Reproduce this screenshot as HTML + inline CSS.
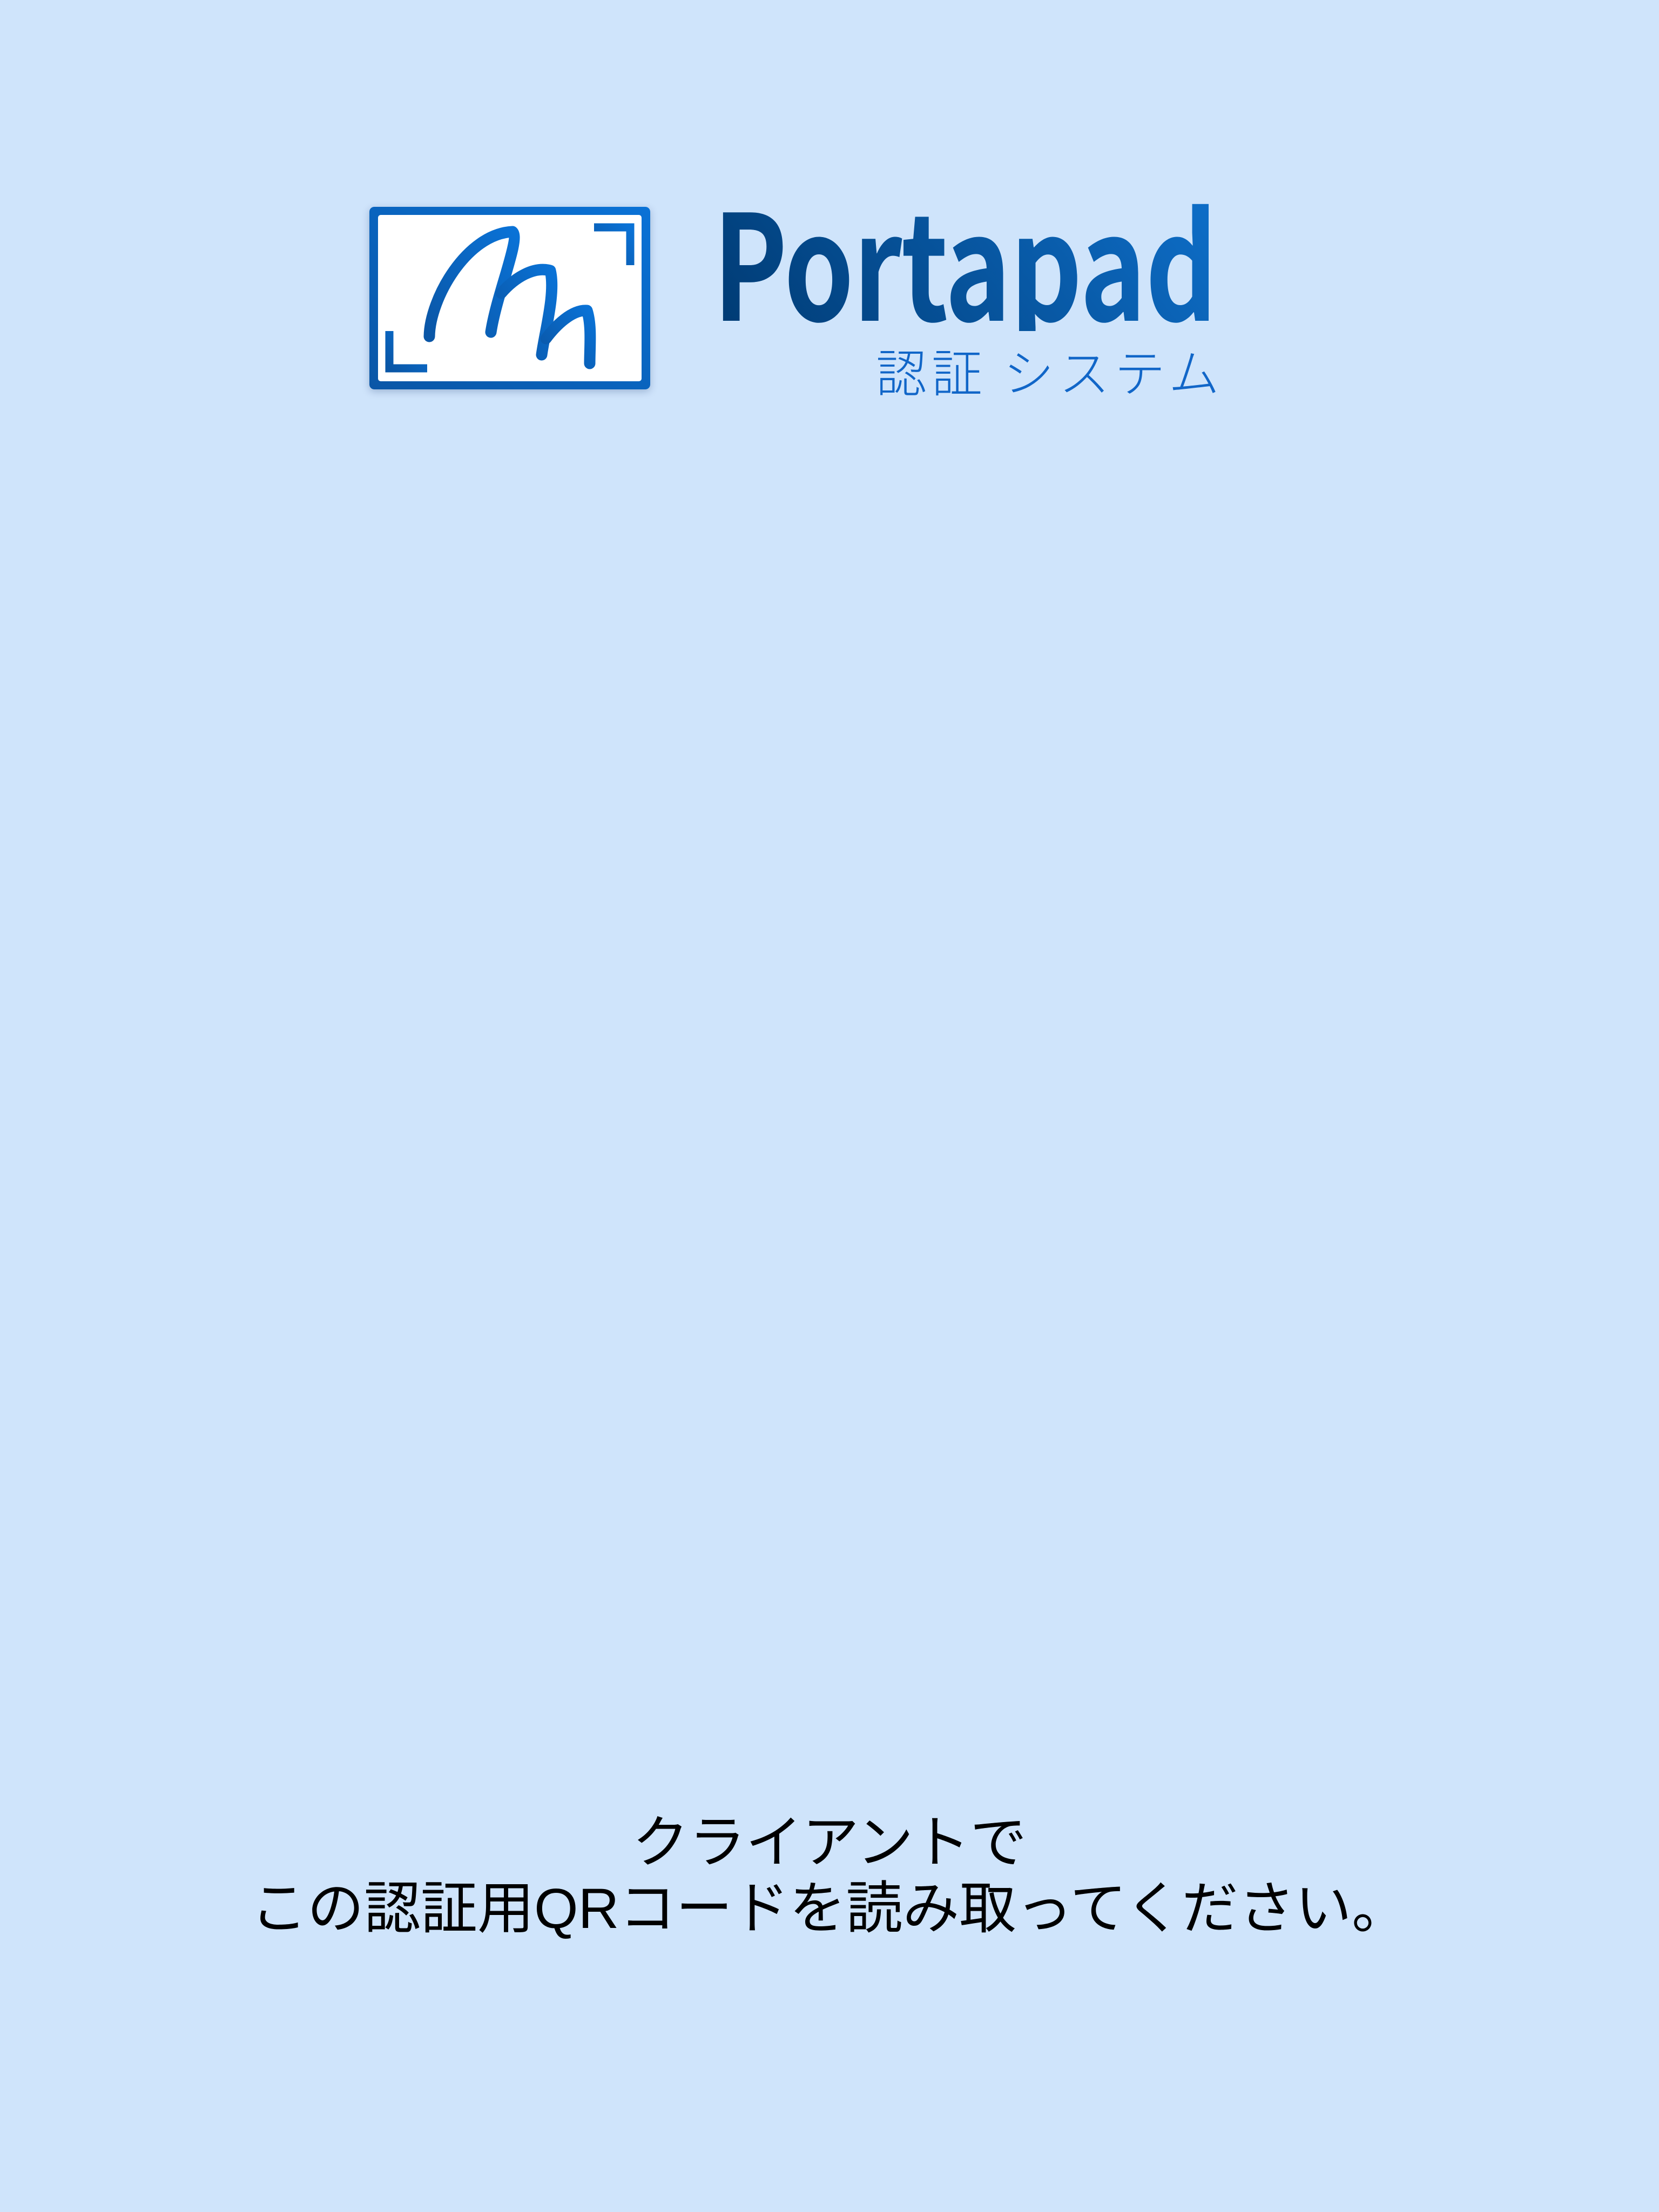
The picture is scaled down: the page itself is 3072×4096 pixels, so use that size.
<!DOCTYPE html>
<html><head><meta charset="utf-8"><style>
html,body{margin:0;padding:0}
body{width:3072px;height:4096px;background:#cfe4fb;position:relative;overflow:hidden;font-family:"Liberation Sans","Noto Sans CJK JP",sans-serif}
.box{position:absolute;left:684px;top:383px;width:520px;height:338px;box-shadow:0 4px 14px rgba(0,40,100,0.25);border-radius:8px}
.title{position:absolute;left:1320px;top:342px;font-family:"Noto Sans CJK JP",sans-serif;font-weight:700;font-size:271px;line-height:271px;white-space:nowrap;background:linear-gradient(45deg,#003a72,#0e6fca);-webkit-background-clip:text;background-clip:text;color:transparent;letter-spacing:-2px;transform:scaleX(0.765);transform-origin:0 0}
.sub{position:absolute;left:1622px;top:620px;font-family:"Noto Sans CJK JP",sans-serif;font-weight:300;font-size:94px;line-height:130px;color:#1166c8;white-space:nowrap;letter-spacing:9px}
.msg{position:absolute;left:0;width:3072px;top:3352px;text-align:center;font-family:"Liberation Sans","Noto Sans CJK JP",sans-serif;font-size:105px;line-height:122px;color:#000}
</style></head><body>
<svg class="box" viewBox="0 0 520 338" width="520" height="338">
<defs><linearGradient id="g" x1="0" y1="1" x2="1" y2="0"><stop offset="0" stop-color="#0a56a6"/><stop offset="1" stop-color="#0a72d6"/></linearGradient></defs>
<rect x="0" y="0" width="520" height="338" rx="9" fill="url(#g)"/>
<rect x="16" y="15" width="488" height="308" rx="5" fill="#fff"/>
<path d="M416 38 H483 V108" fill="none" stroke="url(#g)" stroke-width="15"/>
<path d="M37 230 V299 H107" fill="none" stroke="url(#g)" stroke-width="15"/>
<g fill="none" stroke="url(#g)" stroke-width="21" stroke-linecap="round" stroke-linejoin="round">
<path d="M111 240 C112 170 180 50 265 46 C280 60 236 160 225 232"/>
<path d="M244 160 C270 130 305 110 335 118 C345 160 325 230 319 274"/>
<path d="M327 244 C345 220 375 190 403 192 C412 220 408 260 408 290"/>
</g>
</svg>
<div class="title">Portapad</div>
<div class="sub">認証 システム</div>
<div class="msg">クライアントで<br>この認証用QRコードを読み取ってください。</div>
</body></html>
